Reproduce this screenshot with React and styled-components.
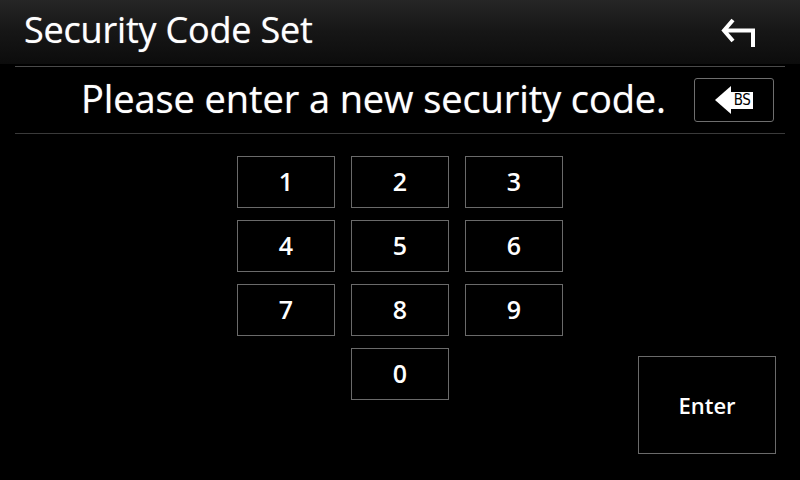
import React from "react";
import styled, { createGlobalStyle } from "styled-components";

const Global = createGlobalStyle`
  html, body { margin: 0; padding: 0; background: #000; }
  body { width: 800px; height: 480px; overflow: hidden; font-family: "Open Sans", "Noto Sans", sans-serif; color: #fff; }
`;

const Screen = styled.div`
  width: 800px;
  height: 480px;
  background: #000;
  display: flex;
  flex-direction: column;
`;

const Header = styled.header`
  height: 64px;
  flex: none;
  background: linear-gradient(180deg, #262626 0%, #161616 50%, #0c0c0c 100%);
  display: flex;
  align-items: center;
  justify-content: space-between;
  padding: 0 40px 0 24px;
  box-sizing: border-box;
`;

const Title = styled.h1`
  margin: 0;
  font-size: 36px;
  font-weight: 400;
  letter-spacing: -0.2px;
  line-height: 1;
  margin-top: -4px;
  text-shadow: 0 0 1px rgba(255,255,255,0.6);
`;

const BackButton = styled.button`
  background: none;
  border: 0;
  padding: 0;
  width: 40px;
  height: 40px;
  display: flex;
  align-items: center;
  justify-content: center;
  margin-top: 4px;
`;

const PromptRow = styled.div`
  margin: 2px 15px 0;
  height: 66px;
  border-top: 1px solid #4a4a4a;
  border-bottom: 1px solid #3a3a3a;
  display: flex;
  align-items: center;
  justify-content: flex-end;
  gap: 28px;
  padding-right: 11px;
`;

const Prompt = styled.div`
  font-size: 38px;
  line-height: 1;
  margin-top: -4px;
  letter-spacing: -0.1px;
  text-shadow: 0 0 1px rgba(255,255,255,0.6);
`;

const BsButton = styled.button`
  width: 80px;
  height: 44px;
  background: #000;
  border: 1px solid #6e6e6e;
  border-radius: 3px;
  box-sizing: border-box;
  padding: 0;
  display: flex;
  align-items: center;
  justify-content: center;
`;

const BsLabel = styled.span`
  display: flex;
  align-items: center;
  justify-content: center;
  background: #fff;
  color: #000;
  width: 22px;
  height: 17px;
  font-family: "DejaVu Sans Condensed", "Liberation Sans Narrow", "Liberation Sans", sans-serif;
  font-weight: 400;
  font-size: 15px;
  letter-spacing: -0.6px;
  line-height: 1;
`;

const BsArrow = styled.span`
  width: 0;
  height: 0;
  border-top: 14px solid transparent;
  border-bottom: 14px solid transparent;
  border-right: 16px solid #fff;
`;

const Main = styled.main`
  flex: 1;
  display: grid;
  grid-template-columns: 1fr auto 1fr;
  padding: 22px 24px 26px 24px;
`;

const Keypad = styled.div`
  grid-column: 2;
  display: grid;
  grid-template-columns: repeat(3, 98px);
  grid-auto-rows: 52px;
  column-gap: 16px;
  row-gap: 12px;
  align-self: start;
`;

const Key = styled.button`
  grid-column: ${(p) => p.$col || "auto"};
  background: #000;
  border: 1px solid #6a6a6a;
  color: #fff;
  font-family: "Open Sans", "Noto Sans", sans-serif;
  font-size: 25px;
  font-weight: 600;
  padding: 0 0 2px;
  display: flex;
  align-items: center;
  justify-content: center;
`;

const EnterButton = styled.button`
  grid-column: 3;
  justify-self: end;
  align-self: end;
  width: 138px;
  height: 98px;
  background: #000;
  border: 1px solid #6a6a6a;
  color: #fff;
  font-family: "Open Sans", "Noto Sans", sans-serif;
  font-size: 22px;
  font-weight: 600;
  padding: 0;
`;

const BackIcon = () => (
  <svg width="40" height="40" viewBox="0 0 40 40">
    <path
      d="M13 6 L4 16.5 L13 27 M4 16.5 H33 V33"
      fill="none"
      stroke="#fff"
      strokeWidth="4"
      strokeLinejoin="miter"
    />
  </svg>
);

export default function App() {
  const keys = ["1", "2", "3", "4", "5", "6", "7", "8", "9"];
  return (
    <>
      <Global />
      <Screen>
        <Header>
          <Title>Security Code Set</Title>
          <BackButton aria-label="Back">
            <BackIcon />
          </BackButton>
        </Header>
        <PromptRow>
          <Prompt>Please enter a new security code.</Prompt>
          <BsButton aria-label="Backspace">
            <BsArrow />
            <BsLabel>BS</BsLabel>
          </BsButton>
        </PromptRow>
        <Main>
          <Keypad>
            {keys.map((k) => (
              <Key key={k}>{k}</Key>
            ))}
            <Key $col={2}>0</Key>
          </Keypad>
          <EnterButton>Enter</EnterButton>
        </Main>
      </Screen>
    </>
  );
}
